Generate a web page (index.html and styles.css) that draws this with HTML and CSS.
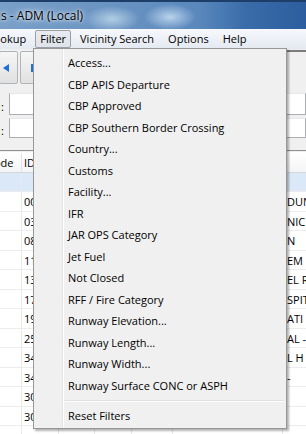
FILE: index.html
```html
<!DOCTYPE html>
<html>
<head>
    <title>Airports - ADM (Local)</title>
    <link rel="stylesheet" href="styles.css">
</head>
<body>
    <div class="window">
        <div class="titlebar">s - ADM (Local)</div>
        <div class="menubar">
            <span class="menu-item first">Lookup</span>
            <span class="menu-item open">Filter</span>
            <span class="menu-item">Vicinity Search</span>
            <span class="menu-item">Options</span>
            <span class="menu-item">Help</span>
        </div>
        <div class="toolbar">
            <div class="nav-btn">
                <svg width="6" height="8" viewBox="0 0 6 8"><path d="M6 0 L0 4 L6 8 Z" fill="#1e6fd9"/></svg>
            </div>
            <div class="nav-btn">
                <svg width="6" height="8" viewBox="0 0 6 8"><rect x="0" y="0" width="2" height="8" fill="#1e6fd9"/></svg>
            </div>
            <div class="tool-panel"></div>
        </div>
        <div class="filters">
            <div class="filter-row">
                <span class="label-left">:</span>
                <span class="field wide"></span>
                <span class="label-right">ty:</span>
                <span class="field"></span>
            </div>
            <div class="filter-row short">
                <span class="label-left">:</span>
                <span class="field wide"></span>
                <span class="label-right">te:</span>
                <span class="field"></span>
            </div>
        </div>
        <div class="grid">
            <div class="row header">
                <span class="code">ode</span><span>ID</span><span>Type</span><span>Use</span><span>State</span><span>City</span><span class="name"></span>
            </div>
            <div class="row new-row">
                <span></span><span></span><span></span><span></span><span></span><span></span><span></span>
            </div>
            <div class="row"><span></span><span>00</span><span></span><span></span><span></span><span></span><span class="name">DUN</span></div>
            <div class="row"><span></span><span>03</span><span></span><span></span><span></span><span></span><span class="name">NIC</span></div>
            <div class="row"><span></span><span>08</span><span></span><span></span><span></span><span></span><span class="name">N</span></div>
            <div class="row"><span></span><span>11</span><span></span><span></span><span></span><span></span><span class="name">EM</span></div>
            <div class="row"><span></span><span>13</span><span></span><span></span><span></span><span></span><span class="name">EL R</span></div>
            <div class="row"><span></span><span>17</span><span></span><span></span><span></span><span></span><span class="name">SPIT</span></div>
            <div class="row"><span></span><span>19</span><span></span><span></span><span></span><span></span><span class="name">ATI</span></div>
            <div class="row"><span></span><span>25</span><span></span><span></span><span></span><span></span><span class="name">AL -</span></div>
            <div class="row"><span></span><span>34</span><span></span><span></span><span></span><span></span><span class="name">L H</span></div>
            <div class="row"><span></span><span>34</span><span></span><span></span><span></span><span></span><span class="name">-</span></div>
            <div class="row"><span></span><span>30</span><span></span><span></span><span></span><span></span><span class="name"></span></div>
            <div class="row"><span></span><span>30</span><span></span><span></span><span></span><span></span><span class="name"></span></div>
            <div class="row"><span></span><span></span><span></span><span></span><span></span><span></span><span class="name"></span></div>
        </div>
    </div>

    <div class="dropdown">
        <div class="item">Access...</div>
        <div class="item">CBP APIS Departure</div>
        <div class="item">CBP Approved</div>
        <div class="item">CBP Southern Border Crossing</div>
        <div class="item">Country...</div>
        <div class="item">Customs</div>
        <div class="item">Facility...</div>
        <div class="item">IFR</div>
        <div class="item">JAR OPS Category</div>
        <div class="item">Jet Fuel</div>
        <div class="item">Not Closed</div>
        <div class="item">RFF / Fire Category</div>
        <div class="item">Runway Elevation...</div>
        <div class="item">Runway Length...</div>
        <div class="item">Runway Width...</div>
        <div class="item">Runway Surface CONC or ASPH</div>
        <div class="separator"></div>
        <div class="item">Reset Filters</div>
    </div>
</body>
</html>
```

FILE: styles.css
```css
body {
    margin: 0;
    width: 306px;
    height: 434px;
    overflow: hidden;
    position: relative;
    background: #f0f0f0;
    font-family: "Open Sans", sans-serif;
    font-size: 11px;
    color: #000;
}
.titlebar {
    height: 27px;
    border-top: 2px solid #1d3e69;
    line-height: 27px;
    font-size: 12px;
    padding-left: 1px;
    text-shadow: 0 0 6px #fff, 0 0 3px rgba(255,255,255,0.8);
    background:
        radial-gradient(ellipse 28px 13px at 112px 17px, rgba(185,212,232,0.9), transparent),
        radial-gradient(ellipse 26px 13px at 170px 15px, rgba(195,218,240,0.9), transparent),
        linear-gradient(to right, #7aa0c9 0, #6590c0 45%, #5a88bd 65%, #3a6caa 80%, #2c5d9e 100%);
}
.menubar {
    height: 20px;
    display: flex;
    align-items: center;
    background: linear-gradient(#f6f8fb, #e4e9f1);
    white-space: nowrap;
}
.menu-item {
    padding: 0 4px;
    margin: 0 2px;
    line-height: 16px;
    border: 1px solid transparent;
}
.menu-item.first {
    margin-left: -17px;
}
.menu-item.open {
    border-color: #9a9ea5;
    border-radius: 2px;
    background: linear-gradient(#e8ebef, #dfe3e9);
}
.toolbar {
    height: 41px;
    display: flex;
    gap: 2px;
    padding: 2px 0 0 0;
    box-sizing: border-box;
}
.nav-btn {
    width: 19px;
    height: 33px;
    box-sizing: border-box;
    border: 1px solid #b0b4ba;
    border-radius: 2px;
    background: linear-gradient(#f6f6f6, #e1e1e1);
    display: flex;
    align-items: center;
    padding-left: 3px;
}
.nav-btn:first-child {
    margin-left: -1px;
}
.nav-btn:nth-child(2) {
    padding-left: 10px;
    width: 40px;
}
.tool-panel {
    flex: 1;
    margin: -1px 0 0 100px;
    border-top: 2px solid #7b7b7b;
}
.filters {
    padding-top: 3px;
    height: 55px;
    box-sizing: border-box;
}
.filter-row {
    display: flex;
    align-items: center;
    height: 22px;
    margin-bottom: 3px;
}
.filter-row.short {
    height: 20px;
}
.label-left {
    width: 10px;
    padding-left: 1px;
    box-sizing: border-box;
    position: relative;
    top: 2px;
}
.label-right {
    margin-left: 7px;
    width: 13px;
    position: relative;
    top: 3px;
}
.field {
    height: 100%;
    width: 40px;
    box-sizing: border-box;
    border: 1px solid #abadb3;
    border-top-color: #e3e9ef;
    background: #fff;
}
.field.wide {
    width: 270px;
}
.grid {
    border-top: 1px solid #8e8f8f;
    margin-top: 5px;
    padding-top: 2px;
    background: #fff;
    box-shadow: inset 0 1px 0 #f0f0f0;
}
.row {
    display: grid;
    grid-template-columns: 22px 37px 36px 37px 41px 110px 80px;
    height: 19.5px;
    line-height: 19px;
    white-space: nowrap;
    overflow: hidden;
}
.row span {
    border-right: 1px solid #e8e8e8;
    border-bottom: 1px solid #ececec;
    padding-left: 2px;
    overflow: hidden;
}
.row span.code {
    padding-left: 0;
    margin-left: -6px;
}
.row span.name {
    padding-left: 4px;
}
.row.header {
    height: 20px;
    background: linear-gradient(#ffffff, #f3f4f6);
}
.row.header span {
    border-right-color: #dfe2e6;
    border-bottom-color: #d5d5d5;
}
.row.new-row {
    height: 19px;
    background: #dbe8f7;
}
.dropdown {
    position: absolute;
    left: 33px;
    top: 48px;
    width: 254px;
    box-sizing: border-box;
    border: 1px solid #979797;
    padding: 3px 2px 1px 2px;
    box-shadow: 2px 2px 2px rgba(0,0,0,0.3);
    background:
        linear-gradient(to right, transparent 28px, #e2e3e3 28px, #e2e3e3 29px, #ffffff 29px, #ffffff 30px, transparent 30px),
        #f0f0f0;
    white-space: nowrap;
}
.item {
    height: 21.5px;
    line-height: 21.5px;
    padding-left: 32px;
}
.separator {
    height: 9px;
    margin-left: 29px;
    background: linear-gradient(transparent 4px, #e0e0e0 4px, #e0e0e0 5px, #ffffff 5px, #ffffff 6px, transparent 6px);
}
```
